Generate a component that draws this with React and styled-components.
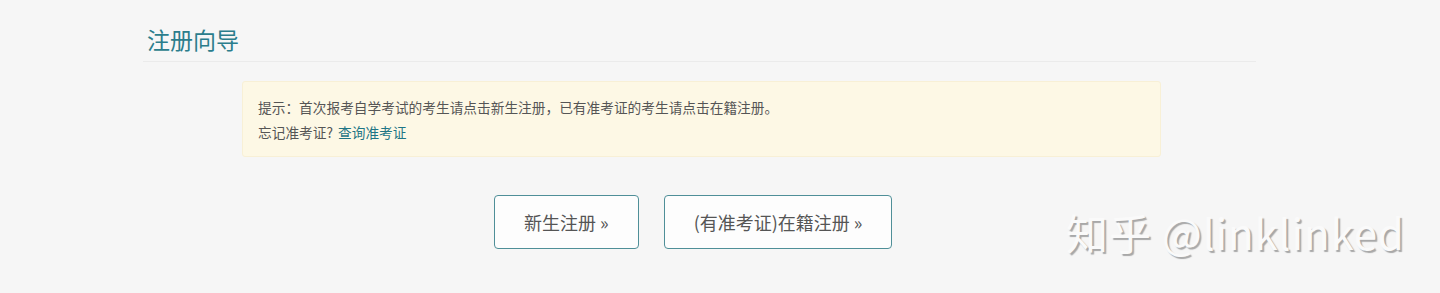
import React from "react";
import styled, { createGlobalStyle } from "styled-components";

const Global = createGlobalStyle`
  html, body { margin: 0; padding: 0; background: #f6f6f6; }
  body { font-family: "Noto Sans CJK SC", "Noto Sans", sans-serif; }
`;

const Page = styled.div`
  position: relative;
  height: 293px;
  overflow: hidden;
  padding-left: 143px;
  box-sizing: border-box;
`;

const Container = styled.div`
  width: 1113px;
`;

const Header = styled.div`
  padding: 23px 0 6px 4px;
  border-bottom: 1px solid #ebebeb;
`;

const Title = styled.h2`
  margin: 0;
  font-size: 23px;
  font-weight: 400;
  line-height: 32px;
  color: #2b7d8c;
`;

const Alert = styled.div`
  margin: 19px 0 0 99px;
  width: 919px;
  box-sizing: border-box;
  padding: 13px 15px 11px;
  background: #fdf8e5;
  border: 1px solid #f8f0d6;
  border-radius: 3px;
  font-size: 13.7px;
  line-height: 25px;
  color: #555;
`;

const Line = styled.p`
  margin: 0;
`;

const Link = styled.a`
  color: #1e7585;
  text-decoration: none;
  margin-left: 2px;
`;

const Actions = styled.div`
  display: flex;
  gap: 25px;
  margin-top: 38px;
  padding-left: 351px;
`;

const Button = styled.button`
  height: 54px;
  box-sizing: border-box;
  padding: 0 29px;
  background: #fdfdfd;
  border: 1px solid #4f8f98;
  border-radius: 4px;
  font-family: "Noto Sans CJK SC", "Noto Sans", sans-serif;
  font-size: 18px;
  color: #555;
  cursor: pointer;
`;

const Watermark = styled.div`
  position: absolute;
  left: 1066px;
  top: 204px;
  font-family: "Noto Sans CJK SC", "Noto Sans", sans-serif;
  font-size: 42px;
  line-height: 56px;
  color: #fafafa;
  text-shadow: 2px 2px 1px #a8a8a8;
  white-space: nowrap;
  letter-spacing: 0.9px;
`;

export default function App() {
  return (
    <>
      <Global />
      <Page>
        <Container>
          <Header>
            <Title>注册向导</Title>
          </Header>
          <Alert>
            <Line>提示：首次报考自学考试的考生请点击新生注册，已有准考证的考生请点击在籍注册。</Line>
            <Line>
              忘记准考证? <Link href="#">查询准考证</Link>
            </Line>
          </Alert>
          <Actions>
            <Button>新生注册 »</Button>
            <Button>(有准考证)在籍注册 »</Button>
          </Actions>
        </Container>
        <Watermark>知乎 @linklinked</Watermark>
      </Page>
    </>
  );
}
